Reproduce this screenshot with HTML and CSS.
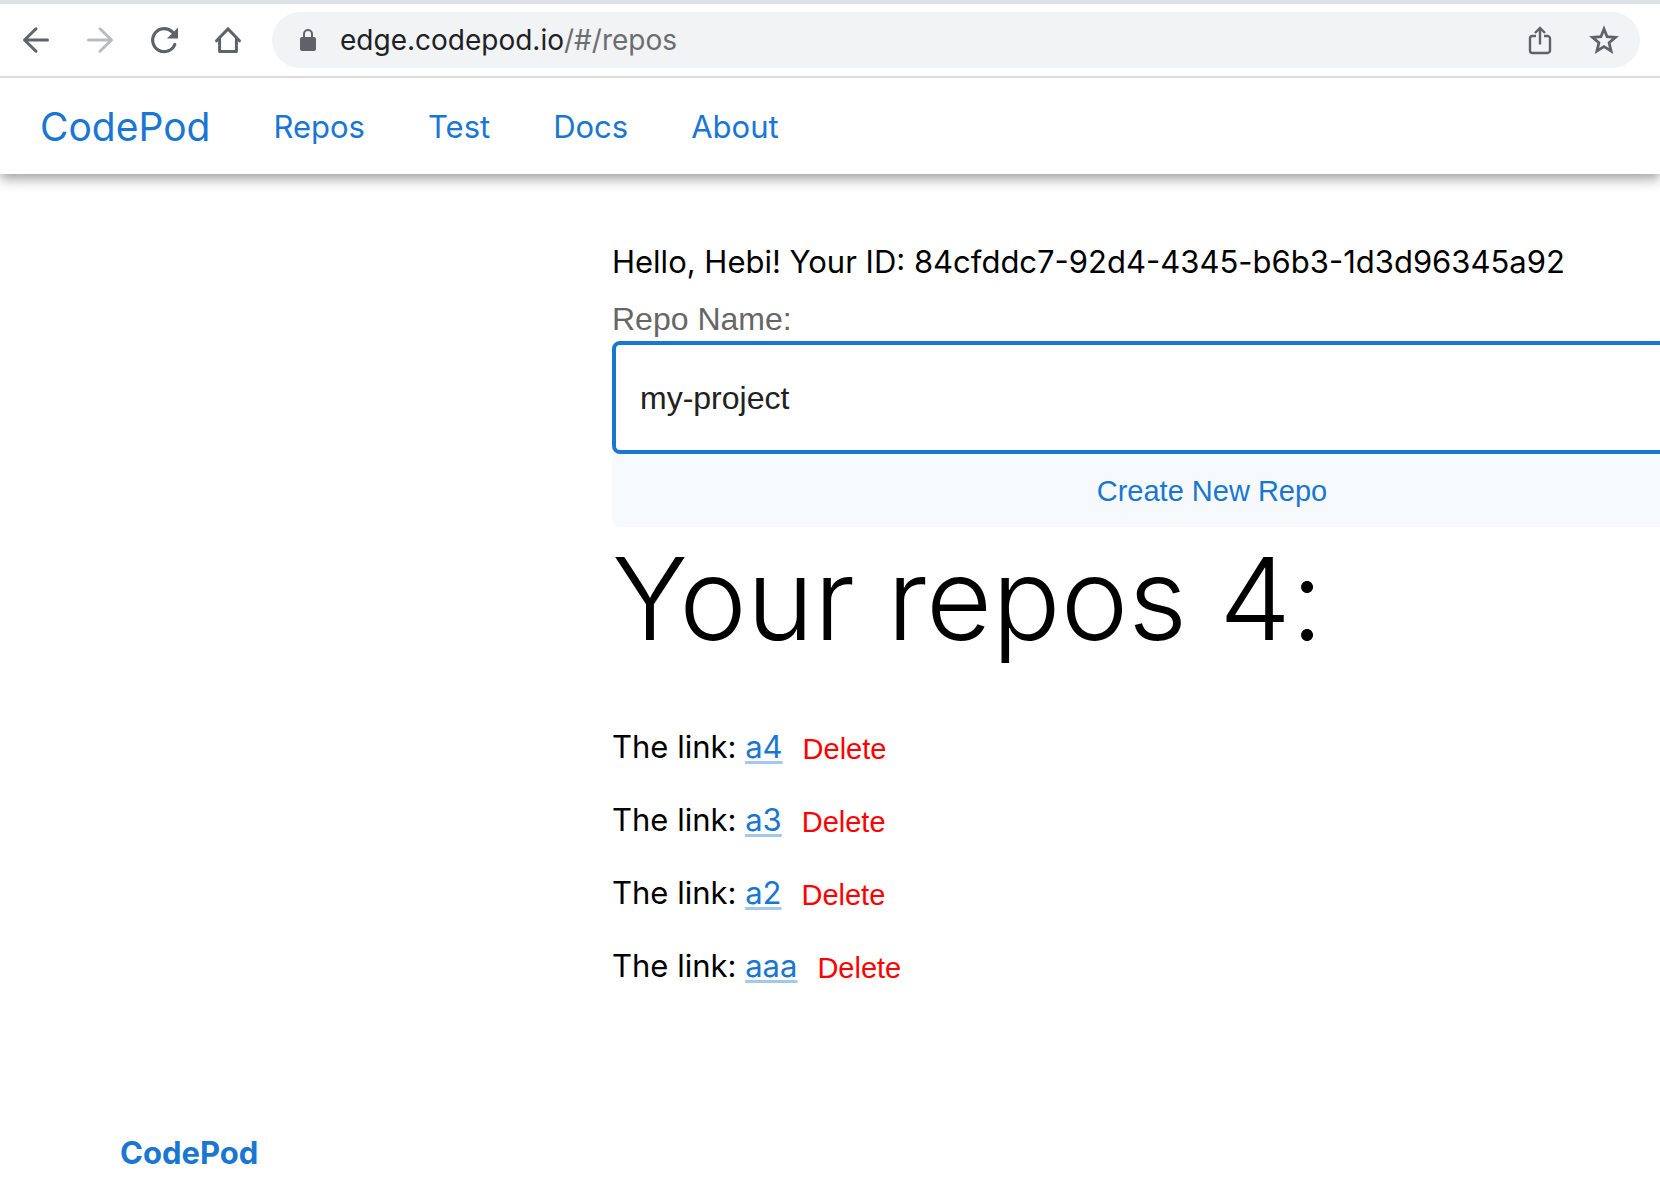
FILE: index.html
```html
<!DOCTYPE html>
<html lang="en">
<head>
<meta charset="utf-8">
<title>CodePod</title>
<link rel="stylesheet" href="styles.css">
</head>
<body>
<div class="toolbar">
  <button class="tool" aria-label="Back"><svg width="32" height="32" viewBox="0 0 32 32" fill="none" stroke="#5f6368" stroke-width="3" stroke-linecap="round" stroke-linejoin="round"><path d="M27.500 16H5M16 4.800L4.500 16L16 27.200"/></svg></button>
  <button class="tool" aria-label="Forward" disabled><svg width="32" height="32" viewBox="0 0 32 32" fill="none" stroke="#babcbe" stroke-width="3" stroke-linecap="round" stroke-linejoin="round"><path d="M4.500 16H27M16 4.800L27.500 16L16 27.200"/></svg></button>
  <button class="tool" aria-label="Reload"><svg width="32" height="32" viewBox="0 0 32 32" fill="none"><path d="M26.800 20.500A11.500 11.500 0 1 1 24.500 8.200" stroke="#5f6368" stroke-width="3.200" stroke-linecap="round"/><path d="M30 3.500V14.500H19Z" fill="#5f6368"/></svg></button>
  <button class="tool" aria-label="Home"><svg width="32" height="32" viewBox="0 0 32 32" fill="none" stroke="#5f6368" stroke-width="3" stroke-linejoin="miter" stroke-linecap="round"><path d="M4.500 16.800L16 5L27.500 16.800"/><path d="M7.600 14.500V27.400H24.400V14.500" stroke-linejoin="round"/></svg></button>
  <div class="address">
    <svg width="20" height="24" viewBox="0 0 20 24"><rect x="2" y="9" width="16" height="14" rx="2" fill="#5f6368"/><path d="M6 9V6a4 4 0 0 1 8 0v3" fill="none" stroke="#5f6368" stroke-width="2"/></svg>
    <span class="url">edge.codepod.io<span class="url-path">/#/repos</span></span>
    <button class="tool" aria-label="Share"><svg width="32" height="32" viewBox="0 0 32 32" fill="none" stroke="#5f6368" stroke-width="2.400"><path d="M12 12H8.500A2.500 2.500 0 0 0 6 14.500V26.500A2.500 2.500 0 0 0 8.500 29H23.500A2.500 2.500 0 0 0 26 26.500V14.500A2.500 2.500 0 0 0 23.500 12H20M16 20.500V4.500M11 9L16 4L21 9"/></svg></button>
    <button class="tool" aria-label="Bookmark"><svg width="32" height="32" viewBox="0 0 32 32" fill="none" stroke="#5f6368" stroke-width="2.800"><path d="M16 5L19.100 12.700L27.500 13.400L21.100 18.800L23.100 27L16 22.600L8.900 27L10.900 18.800L4.500 13.400L12.900 12.700Z"/></svg></button>
  </div>
</div>
<header class="navbar">
  <a class="brand" href="#/">CodePod</a>
  <nav class="links">
    <a href="#/repos">Repos</a>
    <a href="#/test">Test</a>
    <a href="#/docs">Docs</a>
    <a href="#/about">About</a>
  </nav>
</header>
<main class="content">
  <div class="column">
    <p class="hello">Hello, Hebi! Your ID: 84cfddc7-92d4-4345-b6b3-1d3d96345a92</p>
    <form class="create">
      <label for="repo-name">Repo Name:</label>
      <input id="repo-name" type="text" value="my-project">
      <button type="button">Create New Repo</button>
    </form>
    <h2 class="heading">Your repos 4:</h2>
    <ul class="repos">
      <li><span>The link: <a href="#/a4">a4</a></span><button>Delete</button></li>
      <li><span>The link: <a href="#/a3">a3</a></span><button>Delete</button></li>
      <li><span>The link: <a href="#/a2">a2</a></span><button>Delete</button></li>
      <li><span>The link: <a href="#/aaa">aaa</a></span><button>Delete</button></li>
    </ul>
  </div>
</main>
<footer class="footer"><a href="#/">CodePod</a></footer>
</body>
</html>
```
FILE: styles.css
```css
* {
  box-sizing: border-box;
}

body {
  margin: 0;
  background: #fff;
  color: #000;
  font: 31px/48px Inter, sans-serif;
}

a {
  color: #1976d2;
  text-decoration: none;
}

button {
  border: 0;
  background: none;
  font: 29px/48px "Liberation Sans", Arial, sans-serif;
}

/* Browser toolbar */
.toolbar {
  position: relative;
  z-index: 1;
  display: flex;
  align-items: center;
  gap: 32px;
  height: 78px;
  padding: 0 20px;
  border-top: 4px solid #dee1e6;
  border-bottom: 2px solid #dadcde;
  background: #fff;
}

.tool {
  display: flex;
  padding: 0;
}

.address {
  display: flex;
  flex: 1;
  align-items: center;
  gap: 32px;
  height: 56px;
  margin-left: -4px;
  padding: 0 20px 0 26px;
  border-radius: 28px;
  background: #f1f3f4;
}

.url {
  flex: 1;
  margin-left: -10px;
  color: #202124;
  font-size: 28px;
}

.url-path {
  color: #6b6d70;
}

/* Site navigation */
.navbar {
  display: flex;
  align-items: center;
  gap: 63px;
  height: 96px;
  padding: 1px 40px 0;
  box-shadow: 0 4px 8px -2px rgba(0, 0, 0, 0.2), 0 8px 10px rgba(0, 0, 0, 0.14), 0 2px 20px rgba(0, 0, 0, 0.12);
}

.brand {
  font-size: 39px;
}

.links {
  display: flex;
  gap: 63px;
}

/* Repositories */
.content {
  padding: 64px 0 0 612px;
  overflow: hidden;
}

.column {
  width: 1200px;
}

.hello {
  margin: 0;
}

.create {
  display: flex;
  flex-direction: column;
  padding-top: 12px;
  font: 32px/43px "Liberation Sans", Arial, sans-serif;
}

.create label {
  color: #666;
}

.create input {
  height: 113px;
  padding: 2px 24px 0;
  border: 4px solid #1976d2;
  border-radius: 8px;
  color: #212121;
  font: inherit;
  outline: 0;
}

.create button {
  height: 73px;
  border-radius: 8px;
  background: #f6fafd;
  color: #1976d2;
}

.heading {
  margin: 0;
  font-size: 114px;
  font-weight: 300;
  font-feature-settings: "calt" 0;
  line-height: 144px;
}

.repos {
  margin: 0;
  padding: 39px 0 0;
  list-style: none;
}

.repos li {
  display: flex;
  align-items: center;
  height: 73px;
}

.repos a {
  text-decoration: underline 3px #a3c8ed;
  text-underline-offset: 3px;
  text-decoration-skip-ink: none;
}

.repos button {
  padding: 4px 20px 0;
  color: #f00;
}

.footer {
  padding: 127px 120px 0;
  font-weight: 700;
}
```
